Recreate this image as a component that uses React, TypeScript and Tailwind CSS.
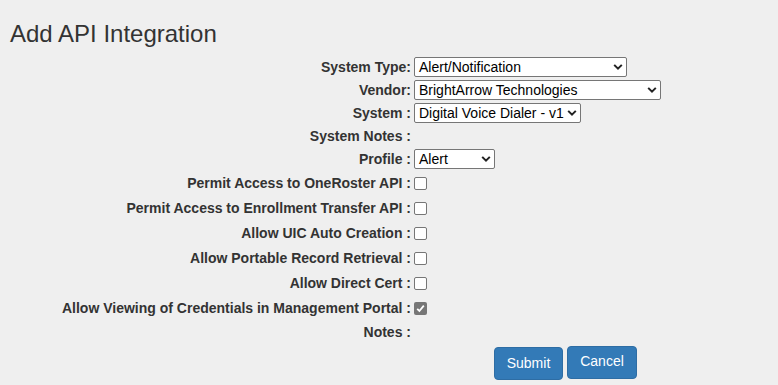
import React from "react";

function Chevron() {
  return (
    <svg
      className="pointer-events-none absolute right-[4px] top-1/2 -translate-y-1/2"
      width="10"
      height="7"
      viewBox="0 0 10 7"
    >
      <path d="M1.2 1.4 L5 5.2 L8.8 1.4" fill="none" stroke="#222" strokeWidth="2" />
    </svg>
  );
}

function Select({ value, width }: { value: string; width: string }) {
  return (
    <div className={`relative h-[20px] ${width}`}>
      <div className="flex h-full w-full items-center overflow-hidden whitespace-nowrap rounded-[2px] border border-[#767676] bg-white pl-[4px] pr-[16px] text-[14px] leading-none text-black">
        {value}
      </div>
      <Chevron />
    </div>
  );
}

function Checkbox({ checked }: { checked?: boolean }) {
  if (checked) {
    return (
      <div className="flex h-[13px] w-[13px] items-center justify-center rounded-[2px] bg-[#767676]">
        <svg width="11" height="11" viewBox="0 0 11 11">
          <path d="M2.2 5.8 L4.4 8 L8.8 2.6" fill="none" stroke="#fff" strokeWidth="1.8" />
        </svg>
      </div>
    );
  }
  return <div className="h-[13px] w-[13px] rounded-[2px] border border-[#767676] bg-white" />;
}

function Row({
  label,
  children,
  tall,
}: {
  label: string;
  children?: React.ReactNode;
  tall?: boolean;
}) {
  return (
    <div className={`flex items-center ${tall ? "h-[25px]" : "h-[23px]"}`}>
      <div className="w-[411px] shrink-0 whitespace-nowrap text-right text-[14px] font-bold text-[#333]">
        {label}
      </div>
      <div className="ml-[3px] flex items-center">{children}</div>
    </div>
  );
}

export default function App() {
  return (
    <div
      className="min-h-[385px] w-full bg-[#efefef] text-[#333]"
      style={{ fontFamily: '"Liberation Sans", Arial, sans-serif' }}
    >
      <h3 className="pl-[10px] pt-[21px] text-[24px] font-normal leading-[26.5px] text-[#333]">
        Add API Integration
      </h3>
      <div className="mt-[8px] flex flex-col">
        <Row label="System Type:">
          <Select value="Alert/Notification" width="w-[213px]" />
        </Row>
        <Row label="Vendor:">
          <Select value="BrightArrow Technologies" width="w-[247px]" />
        </Row>
        <Row label="System :">
          <Select value="Digital Voice Dialer - v1" width="w-[167px]" />
        </Row>
        <Row label="System Notes :" />
        <Row label="Profile :">
          <Select value="Alert" width="w-[81px]" />
        </Row>
        <Row label="Permit Access to OneRoster API :" tall>
          <Checkbox />
        </Row>
        <Row label="Permit Access to Enrollment Transfer API :" tall>
          <Checkbox />
        </Row>
        <Row label="Allow UIC Auto Creation :" tall>
          <Checkbox />
        </Row>
        <Row label="Allow Portable Record Retrieval :" tall>
          <Checkbox />
        </Row>
        <Row label="Allow Direct Cert :" tall>
          <Checkbox />
        </Row>
        <Row label="Allow Viewing of Credentials in Management Portal :" tall>
          <Checkbox checked />
        </Row>
        <Row label="Notes :" />
        <div className="mt-[2px] flex items-start gap-[4px] pl-[494px]">
          <button className="mt-[1px] h-[33px] w-[69px] rounded-[4px] border border-[#2e6da4] bg-[#337ab7] text-[14px] text-white">
            Submit
          </button>
          <button className="h-[33px] w-[70px] rounded-[4px] border border-[#2e6da4] bg-[#337ab7] pb-[2px] text-[14px] text-white">
            Cancel
          </button>
        </div>
      </div>
    </div>
  );
}
